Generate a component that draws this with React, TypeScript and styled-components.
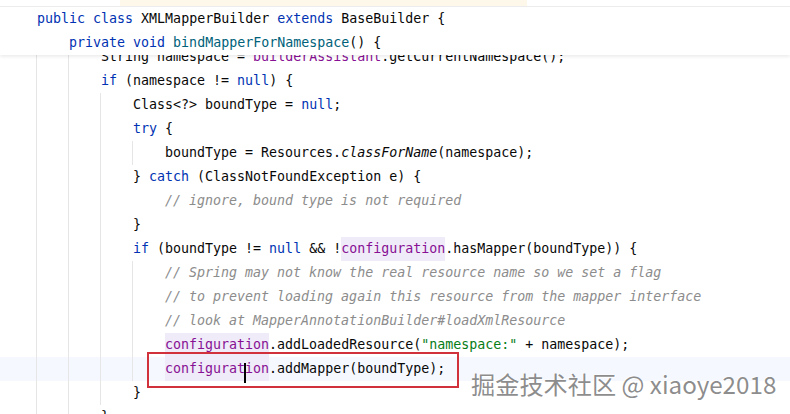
import React from "react";
import styled, { createGlobalStyle } from "styled-components";

const Global = createGlobalStyle`
  html, body { margin: 0; padding: 0; background: #ffffff; }
  body { width: 790px; height: 414px; overflow: hidden; }
`;

type TokType = "p" | "k" | "f" | "m" | "c" | "s" | "i" | "fh" | "cur";
type Tok = [TokType, string];

interface Line {
  level: number;
  guides: number[];
  toks: Tok[];
  current?: boolean;
}

const Page = styled.div`
  position: relative;
  width: 790px;
  height: 414px;
  overflow: hidden;
  background: #ffffff;
  font-family: "DejaVu Sans Mono", "Liberation Mono", monospace;
  font-size: 13.3px;
  color: #080808;
`;

const Sticky = styled.div`
  position: absolute;
  top: 0;
  left: 0;
  right: 0;
  z-index: 2;
  background: #ffffff;
  box-shadow: 0 2px 3px rgba(0, 0, 0, 0.07);
`;

const TopStrip = styled.div`
  display: flex;
  height: 6px;
  border-bottom: 1px solid #ececec;
`;

const StripGap = styled.div`
  width: 120px;
`;

const StripMark = styled.div`
  width: 407px;
  background: #fdf8e9;
`;

const Code = styled.div`
  display: flex;
  flex-direction: column;
  padding-top: 45px;
`;

const Row = styled.div<{ $current?: boolean }>`
  display: flex;
  height: 24px;
  line-height: 24px;
  padding-left: 36px;
  white-space: pre;
  background: ${(p) => (p.$current ? "#f5f8fe" : "transparent")};
`;

const Indent = styled.span<{ $guide: boolean }>`
  flex: 0 0 32px;
  height: 24px;
  box-sizing: border-box;
  border-left: 1px solid ${(p) => (p.$guide ? "#e6e6e6" : "transparent")};
`;

const Text = styled.span`
  display: inline-block;
  padding-left: 1px;
`;

const Kw = styled.span`
  color: #0033b3;
`;
const Field = styled.span`
  color: #871094;
`;
const FieldHl = styled.span`
  display: inline-block;
  color: #871094;
  background: #efebf8;
`;
const MethodDecl = styled.span`
  color: #00627a;
`;
const Comment = styled.span`
  color: #8c8c8c;
  font-style: italic;
`;
const Str = styled.span`
  color: #067d17;
`;
const Ital = styled.span`
  font-style: italic;
`;

const Caret = styled.span`
  position: relative;
  &::after {
    content: "";
    position: absolute;
    left: -1px;
    top: 2px;
    width: 2px;
    height: 20px;
    background: #000000;
  }
`;

const Annotation = styled.div`
  position: absolute;
  left: 147px;
  top: 352px;
  width: 312px;
  height: 36px;
  box-sizing: border-box;
  border: 2px solid #d0313b;
  z-index: 3;
`;

const Watermark = styled.div`
  position: absolute;
  left: 471px;
  top: 370px;
  z-index: 4;
  font-family: "Noto Sans CJK SC", "Noto Sans", sans-serif;
  font-size: 24.2px;
  line-height: 28px;
  color: rgba(120, 120, 120, 0.85);
  text-shadow: 1px 1px 0 rgba(255, 255, 255, 0.9), -1px -1px 0 rgba(255, 255, 255, 0.5);
  white-space: pre;
`;

const renderTok = ([t, s]: Tok, i: number) => {
  switch (t) {
    case "k":
      return <Kw key={i}>{s}</Kw>;
    case "f":
      return <Field key={i}>{s}</Field>;
    case "m":
      return <MethodDecl key={i}>{s}</MethodDecl>;
    case "c":
      return <Comment key={i}>{s}</Comment>;
    case "s":
      return <Str key={i}>{s}</Str>;
    case "i":
      return <Ital key={i}>{s}</Ital>;
    default:
      return <React.Fragment key={i}>{s}</React.Fragment>;
  }
};

const header: Line[] = [
  {
    level: 0,
    guides: [],
    toks: [["k", "public"], ["p", " "], ["k", "class"], ["p", " XMLMapperBuilder "], ["k", "extends"], ["p", " BaseBuilder {"]],
  },
  {
    level: 1,
    guides: [],
    toks: [["k", "private"], ["p", " "], ["k", "void"], ["p", " "], ["m", "bindMapperForNamespace"], ["p", "() {"]],
  },
];

const lines: Line[] = [
  {
    level: 2,
    guides: [0, 1],
    toks: [["p", "String namespace = "], ["f", "builderAssistant"], ["p", ".getCurrentNamespace();"]],
  },
  { level: 2, guides: [0, 1], toks: [["k", "if"], ["p", " (namespace != "], ["k", "null"], ["p", ") {"]] },
  { level: 3, guides: [0, 1, 2], toks: [["p", "Class<?> boundType = "], ["k", "null"], ["p", ";"]] },
  { level: 3, guides: [0, 1, 2], toks: [["k", "try"], ["p", " {"]] },
  {
    level: 4,
    guides: [0, 1, 2, 3],
    toks: [["p", "boundType = Resources."], ["i", "classForName"], ["p", "(namespace);"]],
  },
  { level: 3, guides: [0, 1, 2], toks: [["p", "} "], ["k", "catch"], ["p", " (ClassNotFoundException e) {"]] },
  { level: 4, guides: [0, 1, 2], toks: [["c", "// ignore, bound type is not required"]] },
  { level: 3, guides: [0, 1, 2], toks: [["p", "}"]] },
  {
    level: 3,
    guides: [0, 1, 2],
    toks: [
      ["k", "if"],
      ["p", " (boundType != "],
      ["k", "null"],
      ["p", " && !"],
      ["fh", "configuration"],
      ["p", ".hasMapper(boundType)) {"],
    ],
  },
  { level: 4, guides: [0, 1, 2, 3], toks: [["c", "// Spring may not know the real resource name so we set a flag"]] },
  { level: 4, guides: [0, 1, 2, 3], toks: [["c", "// to prevent loading again this resource from the mapper interface"]] },
  { level: 4, guides: [0, 1, 2, 3], toks: [["c", "// look at MapperAnnotationBuilder#loadXmlResource"]] },
  {
    level: 4,
    guides: [0, 1, 2, 3],
    toks: [["fh", "configuration"], ["p", ".addLoadedResource("], ["s", "\"namespace:\""], ["p", " + namespace);"]],
  },
  {
    level: 4,
    guides: [0, 1, 2, 3],
    current: true,
    toks: [["fh", "configurat"], ["cur", ""], ["fh", "ion"], ["p", ".addMapper(boundType);"]],
  },
  { level: 3, guides: [0, 1, 2], toks: [["p", "}"]] },
  { level: 2, guides: [0, 1], toks: [["p", "}"]] },
];

const CodeLine: React.FC<{ line: Line }> = ({ line }) => {
  const cells = Array.from({ length: line.level }, (_, k) => k);
  let hlBuf: React.ReactNode[] | null = null;
  const out: React.ReactNode[] = [];
  line.toks.forEach((t, i) => {
    if (t[0] === "fh" || t[0] === "cur") {
      if (!hlBuf) hlBuf = [];
      hlBuf.push(t[0] === "cur" ? <Caret key={`c${i}`} /> : t[1]);
      const next = line.toks[i + 1];
      if (!next || (next[0] !== "fh" && next[0] !== "cur")) {
        out.push(<FieldHl key={`h${i}`}>{hlBuf}</FieldHl>);
        hlBuf = null;
      }
    } else {
      out.push(renderTok(t, i));
    }
  });
  return (
    <Row $current={line.current}>
      {cells.map((k) => (
        <Indent key={k} $guide={line.guides.includes(k)} />
      ))}
      <Text>{out}</Text>
    </Row>
  );
};

export default function App() {
  return (
    <Page>
      <Global />
      <Sticky>
        <TopStrip>
          <StripGap />
          <StripMark />
        </TopStrip>
        {header.map((l, i) => (
          <CodeLine key={i} line={l} />
        ))}
      </Sticky>
      <Code>
        {lines.map((l, i) => (
          <CodeLine key={i} line={l} />
        ))}
      </Code>
      <Annotation />
      <Watermark>掘金技术社区 @ xiaoye2018</Watermark>
    </Page>
  );
}
